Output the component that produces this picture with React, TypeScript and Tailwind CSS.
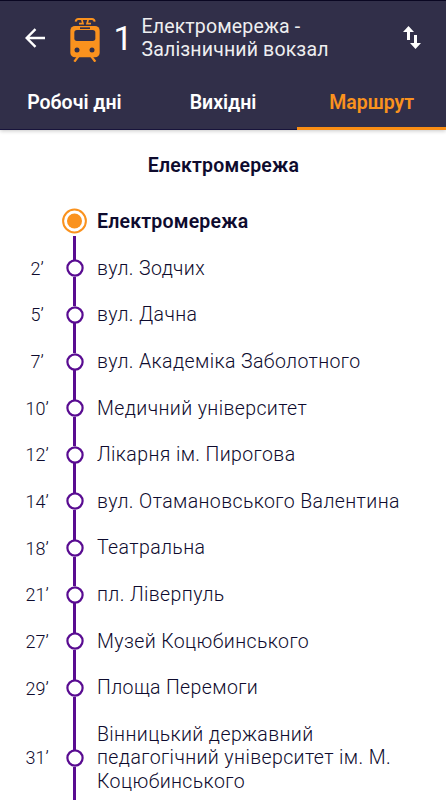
import { clsx } from 'clsx'

type Stop = {
  name: string
  minutes?: number
}

const stops: Stop[] = [
  { name: 'Електромережа' },
  { name: 'вул. Зодчих', minutes: 2 },
  { name: 'вул. Дачна', minutes: 5 },
  { name: 'вул. Академіка Заболотного', minutes: 7 },
  { name: 'Медичний університет', minutes: 10 },
  { name: 'Лікарня ім. Пирогова', minutes: 12 },
  { name: 'вул. Отамановського Валентина', minutes: 14 },
  { name: 'Театральна', minutes: 18 },
  { name: 'пл. Ліверпуль', minutes: 21 },
  { name: 'Музей Коцюбинського', minutes: 27 },
  { name: 'Площа Перемоги', minutes: 29 },
  { name: 'Вінницький державний педагогічний університет ім. М. Коцюбинського', minutes: 31 }
]

const tabs = ['Робочі дні', 'Вихідні', 'Маршрут']

export default function App() {
  return (
    <div className="flex h-[800px] w-[446px] flex-col overflow-hidden bg-white font-['Roboto','Noto_Sans',sans-serif] text-[#0e0b2e]">
      <Header />
      <main className="flex min-h-0 flex-1 flex-col overflow-hidden">
        <h2 className="flex h-[68.3px] shrink-0 items-center justify-center pl-px pt-[2px] text-[19.5px] font-semibold tracking-[0.2px]">
          Електромережа
        </h2>
        <ul>
          {stops.map((stop, index) => (
            <StopRow key={index} stop={stop} isFirst={index === 0} />
          ))}
        </ul>
      </main>
    </div>
  )
}

function Header() {
  return (
    <header className="z-10 flex h-[130px] shrink-0 flex-col border-t border-[#0a0722] bg-[#312f49] text-white shadow-[0_1px_4px_rgba(0,0,0,0.22)]">
      <div className="flex h-[73px] items-center pl-[25px] pr-[25px]">
        <BackIcon />
        <TramIcon />
        <span className="ml-[14px] w-[27px] text-[34px] leading-none">1</span>
        <h1 className="ml-[1px] flex-1 pt-px text-[19.5px] leading-[23.33px] tracking-[0.15px] text-[#eeeef0]">
          Електромережа -<br />
          Залізничний вокзал
        </h1>
        <SwapIcon />
      </div>
      <nav className="grid flex-1 grid-cols-3">
        {tabs.map((tab, index) => (
          <button
            key={tab}
            className={clsx(
              'flex items-center justify-center text-[19.5px] font-semibold',
              index === 2
                ? 'border-b-[3px] border-[#fa8e14] pt-[4px] text-[#fa921e]'
                : 'border-b border-[#17133b] pt-[2px]'
            )}
          >
            {tab}
          </button>
        ))}
      </nav>
    </header>
  )
}

function StopRow({ stop, isFirst }: { stop: Stop; isFirst: boolean }) {
  return (
    <li className="flex">
      <div className="flex w-[60px] items-center pl-[14px] text-[18px] font-light">
        {stop.minutes && <span className="w-[47px] text-center">{stop.minutes}’</span>}
      </div>
      <div className="flex w-[29px] flex-col items-center">
        <span className={clsx('w-[2.4px] flex-1', !isFirst && 'bg-[#590c91]')} />
        {isFirst ? <StartMarker /> : <StopMarker />}
        <span className="w-[2.4px] flex-1 bg-[#590c91]" />
      </div>
      <div
        className={clsx(
          'flex-1 py-[11.67px] pl-2 text-[19.5px] leading-[23.33px]',
          isFirst ? 'pr-10 font-semibold tracking-[0.2px]' : 'pr-9 font-light tracking-[0.39px]'
        )}
      >
        {stop.name}
      </div>
    </li>
  )
}

function StartMarker() {
  return (
    <svg className="h-[29px] w-[25px] shrink-0" viewBox="0 0 25 29">
      <circle cx="12.5" cy="14" r="11.4" fill="none" stroke="#fa921e" strokeWidth="2" />
      <circle cx="12.5" cy="14" r="7.5" fill="#fa921e" />
    </svg>
  )
}

function StopMarker() {
  return (
    <svg className="-my-[0.5px] size-[18px] shrink-0" viewBox="0 0 18 18">
      <circle cx="9" cy="9" r="7.6" fill="white" stroke="#590c91" strokeWidth="2.2" />
    </svg>
  )
}

function BackIcon() {
  return (
    <svg className="h-5 w-5" viewBox="0 0 20 20" fill="none" stroke="currentColor" strokeWidth="2.4">
      <path d="M20 10H2M10.5 1.2 1.7 10l8.8 8.8" />
    </svg>
  )
}

function TramIcon() {
  return (
    <svg className="ml-[24.5px] mt-[3px] h-[45px] w-[30px]" viewBox="0 0 90 135" fill="none">
      <g stroke="#fa921e">
        <path d="M17 14q1-8 8-8h41q7 0 8 8" strokeWidth="6" />
        <path d="M27 20h12l-4-14M63 20H51l4-14" strokeWidth="5" />
        <path d="m25 118-12 16M64 118l12 16" strokeWidth="7" />
      </g>
      <rect x="1" y="27" width="88" height="94" rx="14" fill="#fa921e" />
      <rect x="30" y="31" width="30" height="5" fill="#312f49" />
      <rect x="13" y="39" width="63" height="33" rx="8" fill="#312f49" />
      <circle cx="21" cy="99" r="7.5" fill="#312f49" />
      <circle cx="66" cy="99" r="7.5" fill="#312f49" />
    </svg>
  )
}

function SwapIcon() {
  return (
    <svg className="h-[23px] w-[18px]" viewBox="0 0 18 23" fill="currentColor">
      <path d="M5.5 0 0 6h4v8h3V6h4zM12.5 23 18 17h-4V9h-3v8H7z" />
    </svg>
  )
}
